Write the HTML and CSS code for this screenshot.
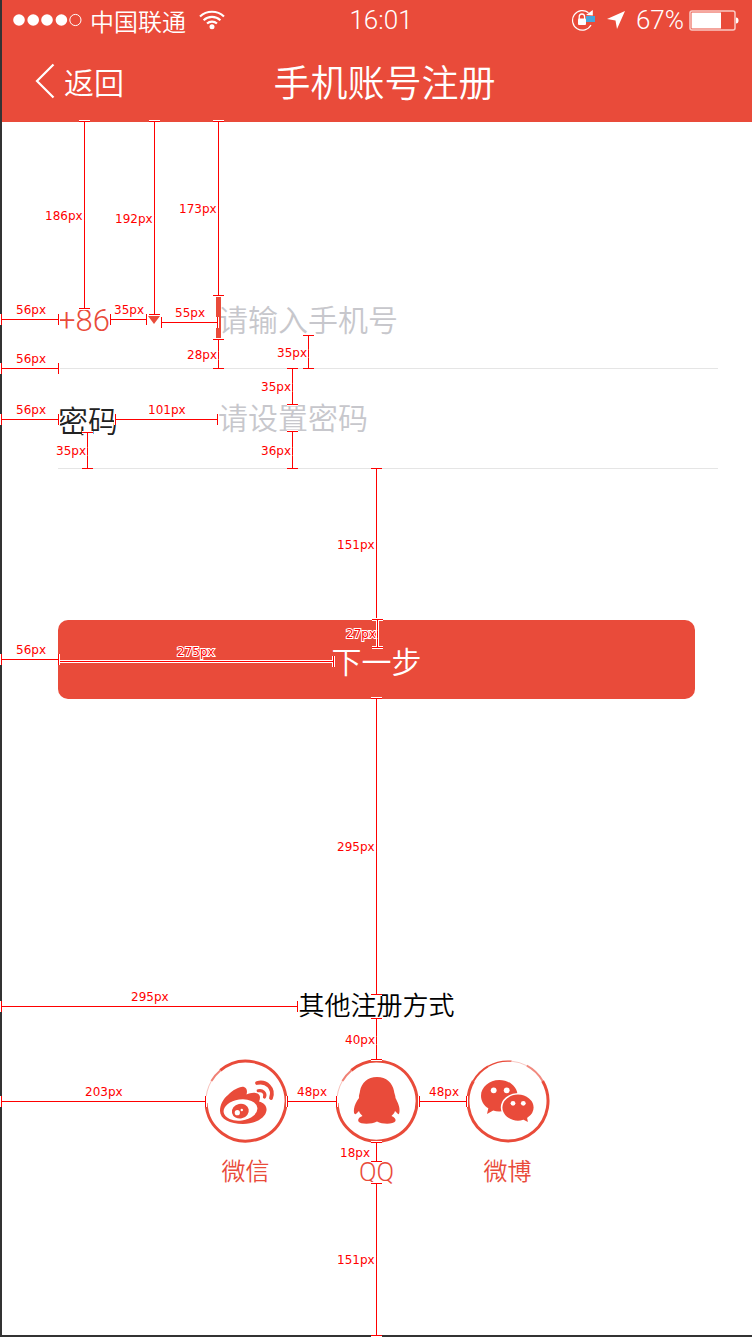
FILE: index.html
```html
<!DOCTYPE html>
<html lang="zh-CN">
<head>
<meta charset="utf-8">
<meta name="viewport" content="width=device-width, initial-scale=1">
<title>手机账号注册</title>
<link rel="stylesheet" href="styles.css">
</head>
<body class="sheet">
<div class="page">
<header class="header">
  <div class="status">
    <div class="status-left">
      <svg class="signal" width="70" height="14" viewBox="0 0 70 14" aria-hidden="true">
        <g fill="#fff"><circle cx="6" cy="7" r="5.8"/><circle cx="20.2" cy="7" r="5.8"/><circle cx="34" cy="7" r="5.8"/><circle cx="48.4" cy="7" r="5.8"/></g>
        <circle cx="62.4" cy="7" r="5.6" fill="none" stroke="#fff"/>
      </svg>
      <span class="carrier">中国联通</span>
      <svg class="wifi" width="26" height="20" viewBox="0 0 26 20" aria-hidden="true">
        <g fill="none" stroke="#fff" stroke-width="2.1"><path d="M1 6.5A17.5 17.5 0 0 1 25 6.5"/><path d="M4.6 10.2A12.2 12.2 0 0 1 21.4 10.2"/><path d="M8 13.6A7.2 7.2 0 0 1 18 13.6"/></g>
        <circle cx="13" cy="16.8" r="2.5" fill="#fff"/>
      </svg>
    </div>
    <time class="clock">16:01</time>
    <div class="status-right">
      <svg width="25" height="22" viewBox="0 0 25 22" aria-hidden="true">
        <path d="M17.5 3.7A9.8 9.8 0 1 0 20 16" fill="none" stroke="#fff" stroke-width="1.2"/>
        <path d="M15 6L21.8 1V6.5Z" fill="#fff"/>
        <path d="M8.2 10V8A2.7 3 0 0 1 13.6 8V10" fill="none" stroke="#fff" stroke-width="1.3"/>
        <rect x="7" y="9.5" width="8" height="6.5" rx="1" fill="#fff"/>
        <rect x="15" y="7" width="9" height="6" fill="#45a5dc"/>
      </svg>
      <svg class="locate" width="18" height="18" viewBox="0 0 18 18" aria-hidden="true"><path d="M18 0L10 18L8.5 9.5L0 8Z" fill="#fff"/></svg>
      <span class="percent">67%</span>
      <svg class="battery" width="50" height="21" viewBox="0 0 50 21" aria-hidden="true">
        <rect x="1" y="1" width="45" height="19" rx="2" fill="none" stroke="#fff" stroke-opacity=".7" stroke-width="1.5"/>
        <path d="M2.5 2.5H32V18.5H2.5Z" fill="#fff"/><path d="M47 7.5Q49.5 7.5 49.5 10.5T47 13.5Z" fill="#fff"/>
      </svg>
    </div>
  </div>
  <nav class="nav">
    <a class="back" href="#">
      <svg width="20" height="36" viewBox="0 0 20 36" aria-hidden="true"><path d="M18.5 1.5L2 18L18.5 34.5" fill="none" stroke="#fff" stroke-width="2.2"/></svg>
      返回
    </a>
    <h1 class="title">手机账号注册</h1>
  </nav>
</header>

<main class="main">
  <form class="form">
    <div class="row row-phone">
      <div class="code">
        <select class="code-select" aria-label="国家代码"><option>+86</option></select>
        <svg width="12" height="8" viewBox="0 0 12 8" aria-hidden="true"><path d="M0 0H12L6 8Z" fill="#e94b3a"/></svg>
      </div>
      <div class="field">
        <span class="caret"></span>
        <input class="input" type="tel" aria-label="手机号" placeholder="请输入手机号">
      </div>
    </div>
    <div class="row">
      <label class="label" for="password">密码</label>
      <input class="input" id="password" type="password" placeholder="请设置密码">
    </div>
    <button class="submit" type="button">下一步</button>
  </form>

  <section class="other">
    <h2 class="other-title">其他注册方式</h2>
    <div class="socials">
      <a class="social" href="#">
        <svg width="84" height="84" viewBox="0 0 84 84" aria-hidden="true">
          <g fill="none" stroke="#e94b3a"><path stroke-width="3" d="M16.3 11.4A40 40 0 1 1 2 44"/><path stroke-width="2" opacity=".7" d="M7.4 22A40 40 0 0 1 16.3 11.4"/><path opacity=".35" d="M2 44A40 40 0 0 1 7.4 22"/></g>
          <path fill="#e94b3a" d="M16 52C16 46 19 40 24 36C29 31 36 27 40 28C43 29 43.500 32 42.500 35.500C46 34 50 33 53.500 34.500C56.500 36 56.500 39 55 42.500C60 44 63 47 62.500 51.500C61.500 59 51 65 39 65C26 65 16 60 16 52Z"/>
          <ellipse cx="36.500" cy="51" rx="17" ry="10.500" fill="#fff" transform="rotate(-8 36.500 51)"/>
          <ellipse cx="36.300" cy="52.200" rx="8.500" ry="7.300" fill="#e94b3a" transform="rotate(-12 36 52)"/>
          <circle cx="33.300" cy="53.700" r="2.600" fill="#fff"/><circle cx="37.800" cy="51" r="1.200" fill="#fff"/>
          <g fill="none" stroke="#e94b3a" stroke-linecap="round"><path stroke-width="3.800" d="M53 24C62.500 21.500 70.500 29.500 67 39"/><path stroke-width="3.200" d="M54.200 31.700C58.800 30.800 62 34 60.500 38"/></g>
        </svg>
        <span class="social-name">微信</span>
      </a>
      <a class="social" href="#">
        <svg width="84" height="84" viewBox="0 0 84 84" aria-hidden="true">
          <g fill="none" stroke="#e94b3a"><path stroke-width="3" d="M16.3 11.4A40 40 0 1 1 2 44"/><path stroke-width="2" opacity=".7" d="M7.4 22A40 40 0 0 1 16.3 11.4"/><path opacity=".35" d="M2 44A40 40 0 0 1 7.4 22"/></g>
          <path fill="#e94b3a" d="M42 18C51.500 18 57.500 24 59 32C59 34 60.500 36 60.500 39C62.500 43 65 48 64.500 52C64.500 55 63.500 56 62.500 54.500L60 52C59.500 54 58 55.500 56.500 57C59.500 58 61 60 60.500 62C58.500 65.500 47.500 65.500 42 62.500C36.500 65.500 25.500 65.500 23.500 62.500C22.500 60 24.500 58 27.500 57C26 55.500 24.500 54 24 52L21.500 54.500C19.500 56.500 18.500 54 19 50C19.500 46 21.500 42 24 39C23.500 36 25 34 25 32C26.500 24 32.500 18 42 18Z"/>
        </svg>
        <span class="social-name social-latin">QQ</span>
      </a>
      <a class="social" href="#">
        <svg width="84" height="84" viewBox="0 0 84 84" aria-hidden="true">
          <g fill="none" stroke="#e94b3a"><path stroke-width="3" d="M76.600 22A40 40 0 1 1 7.400 22"/><path stroke-width="2" d="M7.400 22A40 40 0 0 1 22 7.400"/><path stroke-width="1.300" d="M22 7.400A40 40 0 0 1 45.500 2.200"/><path opacity=".3" d="M45.500 2.200A40 40 0 0 1 60.800 6.700"/><path stroke-width="2" opacity=".65" d="M60.800 6.700A40 40 0 0 1 76.600 22"/></g>
          <path fill="#e94b3a" d="M33.300 20.900C43.400 20.900 51.600 28 51.600 36.700S43.400 52.500 33.300 52.500C31 52.500 29 52.200 27.200 51.500L21 55L22.300 49.300C17.800 46.400 15 41.900 15 36.700C15 28 23.200 20.900 33.300 20.900Z"/>
          <path fill="#e94b3a" stroke="#fff" stroke-width="1.600" d="M52 34.800C61 34.800 68.400 41 68.400 48.600C68.400 53 66 56.800 62 59.300L63 64.500L57.500 61.500C55.800 62.100 54 62.500 52 62.500C43 62.500 35.600 56.200 35.600 48.600S43 34.800 52 34.800Z"/>
          <g fill="#fff"><circle cx="27.700" cy="31.300" r="2.900"/><circle cx="40.700" cy="31.300" r="2.900"/><circle cx="47" cy="44.300" r="2.400"/><circle cx="57.300" cy="44.300" r="2.400"/></g>
        </svg>
        <span class="social-name">微博</span>
      </a>
    </div>
  </section>
</main>
</div>

<svg class="guides" width="752" height="1337" viewBox="0 0 752 1337" role="img" aria-label="尺寸标注">
  <defs>
    <path id="rules" d="M84.500 121V309M79 121.500H90M79 308.500H90
      M154.500 121V315M149 121.500H160M149 314.500H160
      M218.500 121V296M213 121.500H224M213 295.500H224
      M218.500 339V369M213 339.500H224M213 368.500H224
      M308.500 335V369M303 335.500H314M303 368.500H314
      M292.500 368V405M287 368.500H298M287 404.500H298
      M292.500 431V469M287 431.500H298M287 468.500H298
      M87.500 432V469M82 432.500H93M82 468.500H93
      M376.500 468V618M371 468.500H382
      M377.500 619V648M372 619.500H383M372 647.500H383
      M376.500 698V995M371 698.500H382M371 994.500H382
      M376.500 1018V1060M371 1018.500H382M371 1059.500H382
      M376.500 1142V1162M371 1142.500H382M371 1161.500H382
      M376.500 1183V1336M371 1183.500H382M371 1335.500H382
      M1 319.500H59M1.500 314V325M58.500 314V325
      M110 319.500H147M110.500 314V325M146.500 314V325
      M161 322.500H218M161.500 317V328M217.500 317V328
      M1 368.500H59M1.500 363V374M58.500 363V374
      M1 419.500H59M1.500 414V425M58.500 414V425
      M115 419.500H218M115.500 414V425M217.500 414V425
      M1 659.500H59M1.500 654V665M58.500 654V665
      M60 661.500H334M333.500 656V667
      M1 1006.500H298M1.500 1001V1012M297.500 1001V1012
      M1 1101.500H206M1.500 1096V1107M205.500 1096V1107
      M287 1101.500H337M287.500 1096V1107M336.500 1096V1107
      M419 1101.500H467M419.500 1096V1107M466.500 1096V1107"/>
  </defs>
  <use href="#rules" class="rule-halo"/>
  <use href="#rules" class="rule-line"/>
  <g class="sizes">
    <text x="45" y="220">186px</text><text x="115" y="223">192px</text><text x="179" y="213">173px</text>
    <text x="16" y="314">56px</text><text x="114" y="314">35px</text><text x="175" y="317">55px</text>
    <text x="187" y="359">28px</text><text x="277" y="357">35px</text><text x="16" y="363">56px</text>
    <text x="261" y="391">35px</text><text x="16" y="414">56px</text><text x="148" y="414">101px</text>
    <text x="56" y="455">35px</text><text x="261" y="455">36px</text><text x="337" y="549">151px</text>
    <text x="346" y="638">27px</text><text x="16" y="654">56px</text><text x="177" y="656">275px</text>
    <text x="337" y="851">295px</text><text x="131" y="1001">295px</text><text x="345" y="1044">40px</text>
    <text x="85" y="1096">203px</text><text x="297" y="1096">48px</text><text x="429" y="1096">48px</text>
    <text x="340" y="1157">18px</text><text x="337" y="1264">151px</text>
  </g>
</svg>
</body>
</html>
```
FILE: styles.css
```css
* {
  box-sizing: border-box;
}

.sheet {
  position: relative;
  margin: 0;
}

.page {
  display: flex;
  flex-direction: column;
  min-height: 100vh;
  border-left: 2px solid #333;
  border-bottom: 2px solid #333;
  background: #fff;
  font-family: Roboto, "Noto Sans CJK SC", sans-serif;
  font-weight: 350;
}

.header {
  background: #e94b3a;
  color: #fff;
}

.status {
  display: grid;
  grid-template-columns: 1fr auto 1fr;
  align-items: center;
  height: 40px;
  padding: 0 3px 0 11px;
  font-size: 26px;
  font-weight: 300;
}

.status-left,
.status-right {
  display: flex;
  align-items: center;
}

.status-right {
  justify-content: flex-end;
  padding-right: 10px;
}

.carrier {
  margin: 0 13px 0 7px;
  font-size: 24px;
  font-weight: 350;
}

.locate {
  margin: 0 11px;
}

.battery {
  margin-left: 5px;
}

.nav {
  display: grid;
  grid-template-columns: 1fr auto 1fr;
  align-items: center;
  height: 82px;
  padding: 0 18px 0 33px;
}

.back {
  display: flex;
  align-items: center;
  gap: 9px;
  color: #fff;
  font-size: 30px;
  text-decoration: none;
}

.title {
  margin: 0;
  font-size: 37px;
  font-weight: 350;
}

.main {
  padding: 147px 34px 0 56px;
}

.row {
  display: grid;
  grid-template-columns: 160px 1fr;
  align-items: center;
  height: 100px;
  border-bottom: 1px solid #e5e5e5;
}

.row-phone {
  padding-top: 3px;
}

.code {
  display: flex;
  align-items: center;
}

.code-select {
  width: 90px;
  padding: 0;
  border: 0;
  appearance: none;
  background: none;
  color: #e94b3a;
  font: inherit;
  font-size: 31px;
  font-weight: 300;
}

.field {
  position: relative;
}

.caret {
  position: absolute;
  top: 0;
  left: -2px;
  width: 5px;
  height: 42px;
  background: #e94b3a;
}

.input {
  display: block;
  width: 100%;
  height: 46px;
  padding: 0;
  border: 0;
  outline: 0;
  background: none;
  color: #222;
  font: inherit;
  font-size: 30px;
}

.input::placeholder {
  color: #c7c7cc;
  opacity: 1;
}

.label {
  color: #222;
  font-size: 30px;
}

.submit {
  display: block;
  width: calc(100% - 23px);
  height: 79px;
  margin-top: 151px;
  padding: 0;
  border: 0;
  border-radius: 10px;
  background: #e94b3a;
  color: #fff;
  font: inherit;
  font-size: 30px;
}

.other {
  margin: 287px 23px 0 0;
}

.other-title {
  margin: 0 0 33px;
  color: #000;
  font-size: 26px;
  font-weight: 350;
  line-height: 40px;
  text-align: center;
}

.socials {
  display: flex;
  justify-content: center;
  gap: 47px;
}

.social {
  display: flex;
  flex-direction: column;
  align-items: center;
  gap: 12px;
  color: #e94b3a;
  font-size: 24px;
  line-height: 34px;
  text-decoration: none;
}

.social-latin {
  font-size: 26px;
  font-weight: 300;
}

.guides {
  position: absolute;
  top: 0;
  left: 0;
  pointer-events: none;
}

.rule-halo {
  fill: none;
  stroke: #fff;
  stroke-width: 3px;
}

.rule-line {
  fill: none;
  stroke: #f00;
  stroke-width: 1px;
}

.sizes {
  fill: #f00;
  stroke: #fff;
  stroke-width: 2px;
  paint-order: stroke;
  font-family: "DejaVu Sans", sans-serif;
  font-size: 12px;
  font-weight: 400;
}
```
